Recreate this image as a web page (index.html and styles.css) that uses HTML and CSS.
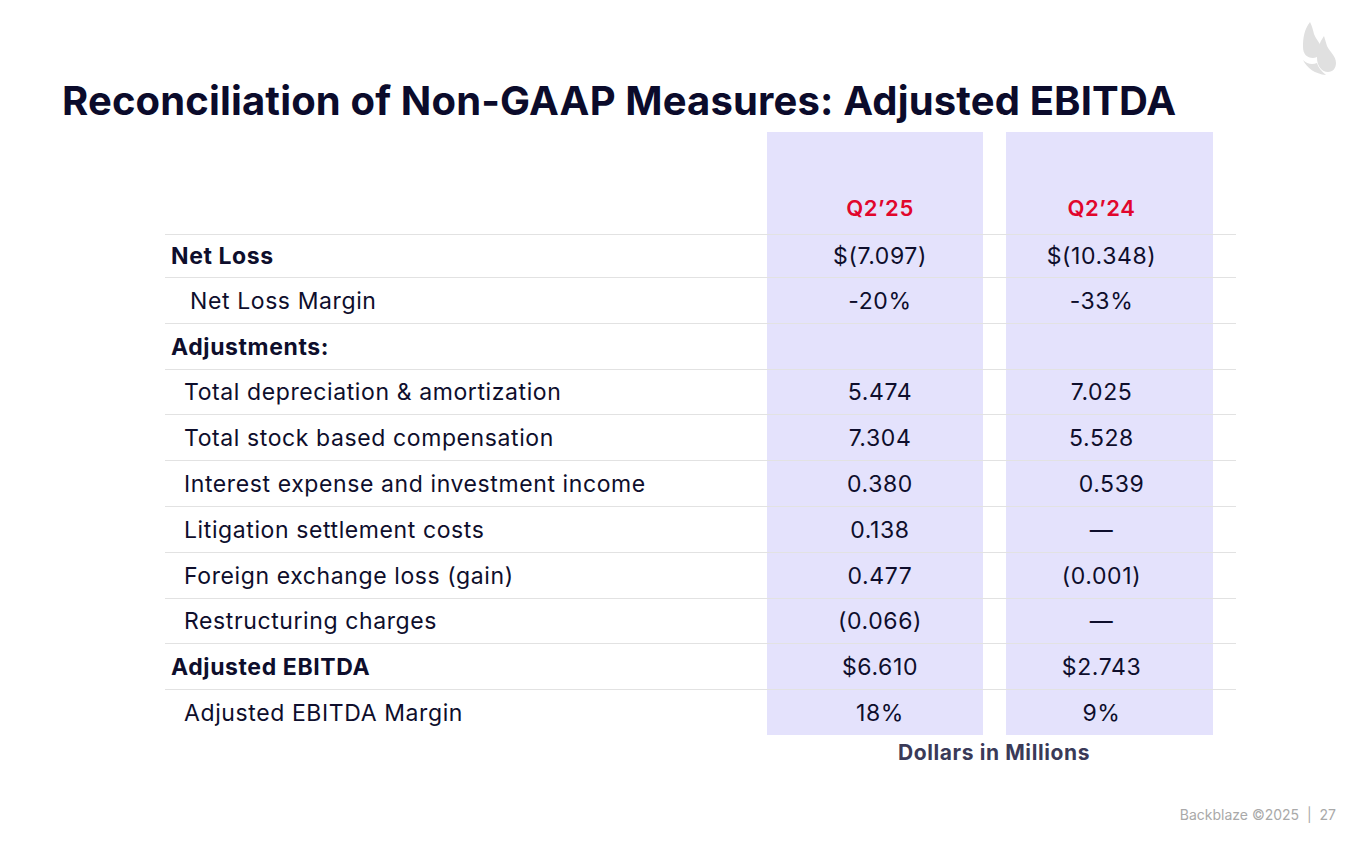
FILE: index.html
```html
<!DOCTYPE html>
<html lang="en">
<head>
<meta charset="utf-8">
<title>Reconciliation of Non-GAAP Measures: Adjusted EBITDA</title>
<link rel="stylesheet" href="styles.css">
</head>
<body>
<div class="slide">
  <div class="topbar">
    <svg class="logo" viewBox="0 0 44 62" width="44" height="62" aria-hidden="true">
      <path d="M14 4 C8 12 7 20 7 29 C7 36 11 40 17 40 C22 40 25 36 25 31 C25 25 20 22 18 16 C17 12 16 8 14 4 Z"/>
      <path d="M28 18 C23 25 21 32 21 40 C21 48 26 54 32 54 C37 54 40 50 40 45 C40 38 34 34 31 28 C30 25 29 21 28 18 Z"/>
      <path d="M7 42 C11 50 19 56 30 57 C25 53 22 49 21 45 C16 47 11 46 7 42 Z"/>
    </svg>
  </div>
  <h1 class="title">Reconciliation of Non-GAAP Measures: Adjusted EBITDA</h1>

  <div class="table">
    <div class="row head">
      <div class="label"></div>
      <div class="val c1">Q2’25</div>
      <div class="gap"></div>
      <div class="val c2">Q2’24</div>
      <div class="gap"></div>
    </div>
    <div class="row first">
      <div class="label bold">Net Loss</div>
      <div class="val c1">$(7.097)</div>
      <div class="gap"></div>
      <div class="val c2">$(10.348)</div>
      <div class="gap"></div>
    </div>
    <div class="row">
      <div class="label deep">Net Loss Margin</div>
      <div class="val c1">-20%</div>
      <div class="gap"></div>
      <div class="val c2">-33%</div>
      <div class="gap"></div>
    </div>
    <div class="row">
      <div class="label bold">Adjustments:</div>
      <div class="val c1"></div>
      <div class="gap"></div>
      <div class="val c2"></div>
      <div class="gap"></div>
    </div>
    <div class="row short">
      <div class="label indent">Total depreciation &amp; amortization</div>
      <div class="val c1">5.474</div>
      <div class="gap"></div>
      <div class="val c2">7.025</div>
      <div class="gap"></div>
    </div>
    <div class="row">
      <div class="label indent">Total stock based compensation</div>
      <div class="val c1">7.304</div>
      <div class="gap"></div>
      <div class="val c2">5.528</div>
      <div class="gap"></div>
    </div>
    <div class="row">
      <div class="label indent">Interest expense and investment income</div>
      <div class="val c1">0.380</div>
      <div class="gap"></div>
      <div class="val c2 nudge">0.539</div>
      <div class="gap"></div>
    </div>
    <div class="row">
      <div class="label indent">Litigation settlement costs</div>
      <div class="val c1">0.138</div>
      <div class="gap"></div>
      <div class="val c2">—</div>
      <div class="gap"></div>
    </div>
    <div class="row">
      <div class="label indent">Foreign exchange loss (gain)</div>
      <div class="val c1">0.477</div>
      <div class="gap"></div>
      <div class="val c2">(0.001)</div>
      <div class="gap"></div>
    </div>
    <div class="row short">
      <div class="label indent">Restructuring charges</div>
      <div class="val c1">(0.066)</div>
      <div class="gap"></div>
      <div class="val c2">—</div>
      <div class="gap"></div>
    </div>
    <div class="row">
      <div class="label bold">Adjusted EBITDA</div>
      <div class="val c1">$6.610</div>
      <div class="gap"></div>
      <div class="val c2">$2.743</div>
      <div class="gap"></div>
    </div>
    <div class="row">
      <div class="label indent">Adjusted EBITDA Margin</div>
      <div class="val c1">18%</div>
      <div class="gap"></div>
      <div class="val c2">9%</div>
      <div class="gap"></div>
    </div>
    <div class="note-row">
      <div class="note">Dollars in Millions</div>
    </div>
  </div>

  <div class="footer">Backblaze ©2025 &nbsp;|&nbsp; 27</div>
</div>
</body>
</html>
```

FILE: styles.css
```css
* { box-sizing: border-box; }

html, body {
  margin: 0;
  padding: 0;
  background: #ffffff;
}

body {
  font-family: "Inter", "Liberation Sans", sans-serif;
  color: #0e0e2c;
}

.slide {
  width: 1365px;
  height: 853px;
  display: flex;
  flex-direction: column;
  overflow: hidden;
}

.topbar {
  display: flex;
  justify-content: flex-end;
  padding: 18px 25px 0 0;
  height: 80px;
}

.logo {
  display: block;
  fill: #e0e0e0;
}

.title {
  margin: -3px 0 0 62px;
  font-family: "Inter", "Liberation Sans", sans-serif;
  font-weight: 700;
  font-size: 40px;
  line-height: 48px;
  letter-spacing: 0.15px;
  color: #0b0b2b;
}

.table {
  margin: 7px 0 0 165px;
  width: 1071px;
  display: flex;
  flex-direction: column;
}

.row {
  display: grid;
  grid-template-columns: 602px 216px 23px 207px 23px;
  height: 46px;
  border-top: 1px solid #e2e2e2;
  font-size: 23px;
  letter-spacing: 0.6px;
}

.row.short {
  height: 45px;
}

.row.head {
  height: 102px;
  border-top: none;
}

.row.first {
  height: 43px;
}

.label,
.val {
  display: flex;
  align-items: center;
}

.val {
  justify-content: center;
  background: #e4e2fc;
}

.val.c1 { padding-left: 10px; }
.val.c2 { padding-right: 16px; }
.val.nudge { padding-left: 4px; padding-right: 0; }

.head .val {
  align-items: flex-end;
  padding-bottom: 13px;
  color: #e1062c;
  font-weight: 600;
  font-size: 22px;
  letter-spacing: 0.6px;
}

.label { padding-left: 6px; }
.label.bold { font-weight: 700; }
.label.indent { padding-left: 19px; }
.label.deep { padding-left: 25px; }

.note-row {
  display: grid;
  grid-template-columns: 602px 446px;
  padding-top: 6px;
}

.note {
  grid-column: 2;
  text-align: center;
  font-weight: 700;
  font-size: 21px;
  line-height: 24px;
  letter-spacing: 0.6px;
  color: #3a3a58;
  padding-left: 8px;
}

.footer {
  margin-top: auto;
  align-self: flex-end;
  padding: 0 29px 29px 0;
  font-size: 14px;
  line-height: 18px;
  color: #a9a9a9;
}
```
